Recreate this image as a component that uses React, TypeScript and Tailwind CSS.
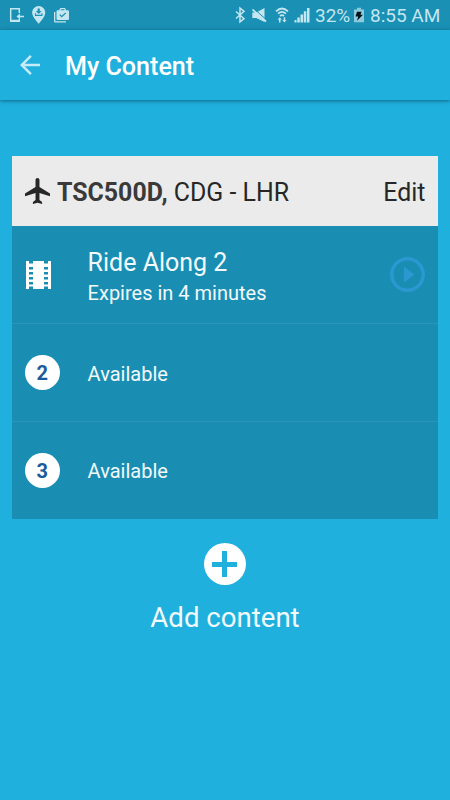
import React from 'react';

interface SlotProps {
  icon: React.ReactNode;
  children: React.ReactNode;
  action?: React.ReactNode;
}

const StatusLeftIcons = () => (
  <svg className="h-[30px] w-20 shrink-0" viewBox="0 0 80 30" fill="#c4e6f0">
    <path d="M19.300 13V8.700h-8.600v12.600h8.600V19M11 20.500h8" fill="none" stroke="#c4e6f0" strokeWidth="1.500" />
    <path d="M16.500 16.500l3.500-3v2.200H24v1.600h-4v2.200z" />
    <path fillRule="evenodd" d="M38.700 6a6.600 6.600 0 0 0-6.600 6.600c0 4.600 6.600 11.200 6.600 11.200s6.600-6.600 6.600-11.200A6.600 6.600 0 0 0 38.700 6zm-1.100 2.500h2.200V11h1.800l-2.900 2.900-2.900-2.900h1.800zM34.900 13.200H36v1.600h5.400v-1.600h1.100v2.700h-7.600z" />
    <path d="M54 12h1.300v9.200H66v1.300H55.300A1.300 1.300 0 0 1 54 21.200z" />
    <path fillRule="evenodd" d="M60.500 8h4.300l1 1v1.200h2A1.200 1.200 0 0 1 69 11.400v7.400a1.200 1.200 0 0 1-1.200 1.200H57.700a1.200 1.200 0 0 1-1.200-1.200v-7.400a1.200 1.200 0 0 1 1.200-1.200h1.800V9zm.3 1.200v1h3.700v-1zM60.200 14.200l-.9.900 2.500 2.400 4.400-4.200-.9-.9-3.500 3.300z" />
  </svg>
);

const StatusRightIcons = () => (
  <svg className="h-[30px] w-[78px] shrink-0" viewBox="234 0 78 30" fill="#c4e6f0">
    <path d="M236 11.500l8 7.200-4 3.300V8l4 3.300-8 7.200" fill="none" stroke="#c4e6f0" strokeWidth="1.500" />
    <path d="M252.300 12.500h4L264.500 8v14L256.300 18h-4z" />
    <path d="M254.500 9.300L267 20.300" stroke="#1991b5" strokeWidth="1" />
    <path d="M252.500 9.500L266 21.500" stroke="#c4e6f0" strokeWidth="1.700" />
    <path d="M276 11.300q6-5.600 12 0M278 13.700q4-3.600 8 0M280 16q2-1.800 4 0" fill="none" stroke="#c4e6f0" strokeWidth="1.700" />
    <path d="M279.700 17.300l2.200 2.400h-1.400V22.500h-1.500v-2.800h-1.400zM284.400 22.500l2.200-2.400h-1.400v-2.800h-1.500v2.800h-1.400z" />
    <path d="M294.500 20h2v2.500h-2zM297.300 17.500h2.500v5h-2.500zM300.500 14.500h2.600v8h-2.600zM303.800 11.300h2.500v11.200h-2.500zM307 8h2.500v14.500H307z" />
  </svg>
);

const BatteryIcon = () => (
  <svg className="h-[30px] w-[10px] shrink-0" viewBox="354 0 10 30">
    <path d="M357 7.800h4v1.700h3V22.300h-10V9.500h3z" fill="#8fcbdd" />
    <path d="M357 11.800h4.500l-1 3h2.500l-6 6 1.200-4.300h-2.700z" fill="#04141a" />
  </svg>
);

const ArrowBackIcon = () => (
  <svg className="h-[30px] w-[30px]" viewBox="0 0 24 24" fill="#c4ebf7">
    <path d="M20 11H7.830l5.590-5.590L12 4l-8 8 8 8 1.410-1.410L7.830 13H20v-2z" />
  </svg>
);

const PlaneIcon = () => (
  <svg className="h-[26px] w-[25px] shrink-0" viewBox="2 2 19 20" preserveAspectRatio="none" fill="#272727">
    <path d="M21.500 16v-2l-8-5V3.500c0-.83-.67-1.500-1.500-1.500s-1.500.67-1.500 1.500V9l-8 5v2l8-2.500V19l-2 1.500V22l3.500-1 3.500 1v-1.500L13.500 19v-5.500l8 2.500z" transform="translate(-.5 0)" />
  </svg>
);

// Film strip with four sprocket holes on each side
const FilmIcon = () => (
  <svg className="ml-px h-[28px] w-[25px]" viewBox="0 0 25 28" fill="#fff">
    <path
      fillRule="evenodd"
      d="M0 0h3v2.500h4V0h11v2.500h4V0h3v28h-3v-2.500h-4V28H7v-2.500H3V28H0zM3 6v2.500h4V6zM3 11v2.500h4V11zM3 16v2.500h4V16zM3 21v2.500h4V21zM18 6v2.500h4V6zM18 11v2.500h4V11zM18 16v2.500h4V16zM18 21v2.500h4V21z"
    />
  </svg>
);

const PlayIcon = () => (
  <svg className="h-[35px] w-[35px]" viewBox="2 2 20 20" fill="#2b98d2">
    <path d="M10 16.500l6-4.500-6-4.500v9zM12 2C6.480 2 2 6.480 2 12s4.480 10 10 10 10-4.480 10-10S17.520 2 12 2zm0 18c-4.410 0-8-3.590-8-8s3.590-8 8-8 8 3.590 8 8-3.590 8-8 8z" />
  </svg>
);

const AddIcon = () => (
  <svg className="h-[42px] w-[42px]" viewBox="0 0 42 42">
    <circle cx="21" cy="21" r="21" fill="#fff" />
    <path d="M20.500 8v26M8 21.500h25" stroke="#20b0de" strokeWidth="5" />
  </svg>
);

const NumberBadge = ({ value }: { value: number }) => (
  <div className="flex h-[35px] w-[35px] items-center justify-center rounded-full bg-white pt-px text-[20px] font-bold text-[#1c5a9a]">
    {value}
  </div>
);

const Slot: React.FC<SlotProps> = ({ icon, children, action }) => (
  <div className="flex h-[98px] items-center pr-[13px] pl-[12.8px] text-[#f2fafc] last:h-[97px]">
    <div className="w-[62.8px] shrink-0">{icon}</div>
    <div className="flex-1">{children}</div>
    {action}
  </div>
);

const App: React.FC = () => {
  return (
    <div className="h-[800px] w-[450px] overflow-hidden bg-[#20b0de] font-[Roboto,sans-serif] whitespace-nowrap">
      {/* Status bar */}
      <div className="flex h-[30px] items-center bg-[#1990b4] text-[19px] leading-[30px] text-[#c4e6f0]">
        <StatusLeftIcons />
        <div className="flex-1" />
        <StatusRightIcons />
        <span className="ml-[3px] w-[39px] pt-[2px]">32%</span>
        <BatteryIcon />
        <span className="ml-[6px] w-[80px] pt-[2px]">8:55 AM</span>
      </div>

      {/* Toolbar */}
      <header className="flex h-[70px] items-center pl-[15px] shadow-[0_1px_4px_rgba(0,50,70,0.6)]">
        <ArrowBackIcon />
        <h1 className="ml-[20px] pt-[3px] text-[25.1px] leading-[30px] font-medium text-white">My Content</h1>
      </header>

      <main className="px-3 pt-14">
        <section className="bg-[#198eb2]">
          <div className="flex h-[70px] items-center bg-[#ebebeb] pr-[12.6px] pl-[13px] text-[24.9px] text-[#272727]">
            <PlaneIcon />
            <span className="ml-[7px] flex-1 pt-[3px]">
              <b className="font-bold text-[#3a3a3a]">TSC500D,</b> CDG - LHR
            </span>
            <span className="pt-[3px]">Edit</span>
          </div>
          <div className="divide-y divide-[#2b93bd]">
            <Slot icon={<FilmIcon />} action={<PlayIcon />}>
              <div className="pt-[7px] text-[25px] leading-[30px]">Ride Along 2</div>
              <div className="text-[20px] leading-[30px]">Expires in 4 minutes</div>
            </Slot>
            <Slot icon={<NumberBadge value={2} />}>
              <div className="pt-[2px] text-[20px]">Available</div>
            </Slot>
            <Slot icon={<NumberBadge value={3} />}>
              <div className="pt-px text-[20px]">Available</div>
            </Slot>
          </div>
        </section>

        <button className="mx-auto mt-[24px] flex flex-col items-center">
          <AddIcon />
          <span className="mt-[15px] text-[27.6px] leading-[36px] text-[#f2fafc]">Add content</span>
        </button>
      </main>
    </div>
  );
};

export default App;
